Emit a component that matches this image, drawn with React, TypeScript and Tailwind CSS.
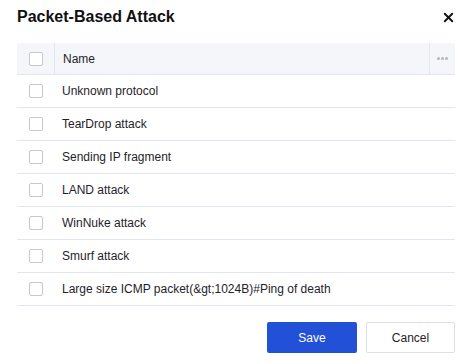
import { X } from 'lucide-react'

const rows = [
  'Unknown protocol',
  'TearDrop attack',
  'Sending IP fragment',
  'LAND attack',
  'WinNuke attack',
  'Smurf attack',
  'Large size ICMP packet(&gt;1024B)#Ping of death',
]

function Box() {
  return <div className="w-[14px] h-[14px] rounded-[2px] border border-[#c5c8ce] bg-white" />
}

export default function App() {
  return (
    <div
      className="w-[466px] h-[364px] bg-white text-[#1f2329] overflow-hidden"
      style={{ fontFamily: '"Liberation Sans", Arial, sans-serif' }}
    >
      {/* Header */}
      <div className="h-[32px] flex items-center justify-between pl-[17px] pr-[10px] pt-[2px]">
        <div className="text-[16px] font-bold text-[#111]">Packet-Based Attack</div>
        <X size={15} strokeWidth={3} className="text-[#111]" />
      </div>

      {/* Table */}
      <div className="mt-[11px] ml-[17px] w-[438px]">
        <div className="flex h-[32px] items-center bg-[#f4f6f9] border-b border-[#e3e6ef] text-[12px]">
          <div className="w-[38px] h-full flex items-center justify-center border-r border-[#e3e6ef]">
            <Box />
          </div>
          <div className="flex-1 pl-[8px]">Name</div>
          <div className="w-[26px] h-full flex items-center justify-center border-l border-[#e3e6ef]">
            <span className="flex gap-[1px]">
              <span className="w-[3px] h-[3px] rounded-full bg-[#b3b7bf]" />
              <span className="w-[3px] h-[3px] rounded-full bg-[#b3b7bf]" />
              <span className="w-[3px] h-[3px] rounded-full bg-[#b3b7bf]" />
            </span>
          </div>
        </div>
        {rows.map((r) => (
          <div key={r} className="flex h-[33px] items-center border-b border-[#e3e6ef] text-[12px]">
            <div className="w-[38px] flex items-center justify-center">
              <Box />
            </div>
            <div className="flex-1 pl-[7px]">{r}</div>
          </div>
        ))}
      </div>

      {/* Footer */}
      <div className="mt-[16px] ml-[17px] w-[438px] flex justify-end gap-[9px] text-[12px]">
        <button className="w-[90px] h-[31px] rounded-[2px] bg-[#2251d8] text-white">Save</button>
        <button className="w-[89px] h-[31px] rounded-[2px] border border-[#dcdfe6] bg-white text-[#1f2329]">
          Cancel
        </button>
      </div>
    </div>
  )
}
